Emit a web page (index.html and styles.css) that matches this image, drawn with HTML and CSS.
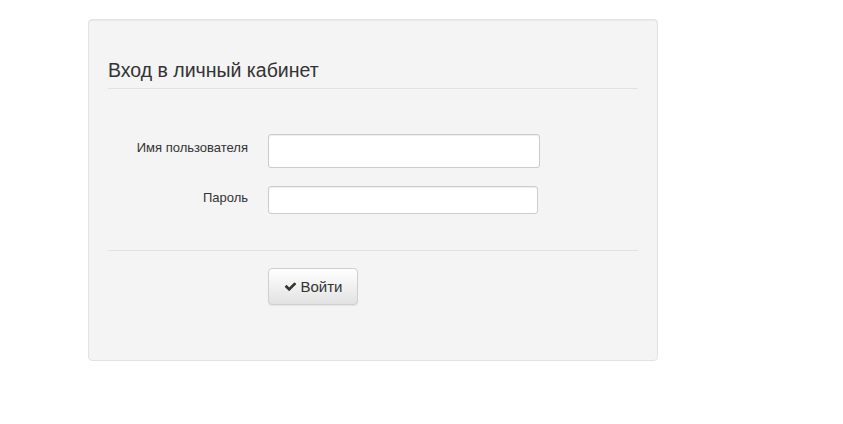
FILE: index.html
```html
<!DOCTYPE html>
<html lang="ru">
<head>
<meta charset="utf-8">
<title>Вход в личный кабинет</title>
<link rel="stylesheet" href="styles.css">
</head>
<body>
<div class="well">
  <form class="login-form">
    <h2 class="legend">Вход в личный кабинет</h2>
    <div class="fields">
      <div class="row">
        <label class="label label-user" for="user">Имя пользователя</label>
        <input class="input input-user" id="user" type="text">
      </div>
      <div class="row">
        <label class="label label-pass" for="pass">Пароль</label>
        <input class="input input-pass" id="pass" type="password">
      </div>
    </div>
    <div class="actions">
      <button type="button" class="btn">
        <svg class="icon" viewBox="0 0 1792 1792" aria-hidden="true"><path d="M1671 566q0 40-28 68l-724 724-136 136q-28 28-68 28t-68-28l-136-136-362-362q-28-28-28-68t28-68l136-136q28-28 68-28t68 28l294 295 656-657q28-28 68-28t68 28l136 136q28 28 28 68z" fill="#333"/></svg>
        <span>Войти</span>
      </button>
    </div>
  </form>
</div>
</body>
</html>
```

FILE: styles.css
```css
html, body {
  margin: 0;
  padding: 0;
  background: #ffffff;
}

body {
  font-family: "Liberation Sans", Arial, sans-serif;
  color: #333333;
  font-size: 14px;
}

.well {
  box-sizing: border-box;
  width: 570px;
  height: 342px;
  margin: 19px 0 0 88px;
  padding: 19px;
  background: #f4f4f4;
  border: 1px solid #e3e3e3;
  border-radius: 4px;
  box-shadow: inset 0 1px 1px rgba(0, 0, 0, 0.05);
}

.login-form {
  margin: 0;
}

.legend {
  margin: 20px 0 0 0;
  padding: 0 0 7px 0;
  font-size: 19.5px;
  line-height: 22px;
  font-weight: normal;
  color: #333333;
  border-bottom: 1px solid #e2e2e2;
}

.fields {
  display: flex;
  flex-direction: column;
  gap: 18px;
  padding: 45px 0 36px 0;
  border-bottom: 1px solid #e2e2e2;
}

.row {
  display: flex;
  align-items: flex-start;
  gap: 20px;
}

.label {
  width: 140px;
  text-align: right;
  font-size: 13px;
  line-height: 18px;
  color: #333333;
}

.label-user {
  padding-top: 5px;
}

.label-pass {
  padding-top: 3px;
}

.input {
  box-sizing: border-box;
  margin: 0;
  background: #ffffff;
  border: 1px solid #cccccc;
  border-radius: 3px;
  box-shadow: inset 0 1px 1px rgba(0, 0, 0, 0.075);
  font-family: inherit;
  font-size: 14px;
  padding: 4px 8px;
  outline: none;
}

.input-user {
  width: 272px;
  height: 34px;
}

.input-pass {
  width: 270px;
  height: 28px;
}

.actions {
  padding: 17px 0 0 160px;
}

.btn {
  box-sizing: border-box;
  display: flex;
  align-items: center;
  justify-content: center;
  gap: 4px;
  width: 90px;
  height: 37px;
  padding: 0 12px;
  margin: 0;
  font-family: inherit;
  font-size: 15px;
  color: #333333;
  background: linear-gradient(to bottom, #ffffff 0%, #e2e2e2 100%);
  border: 1px solid #cfcfcf;
  border-radius: 4px;
  box-shadow: 0 1px 1px rgba(0, 0, 0, 0.075);
  cursor: pointer;
}

.icon {
  width: 13px;
  height: 13px;
}
```
